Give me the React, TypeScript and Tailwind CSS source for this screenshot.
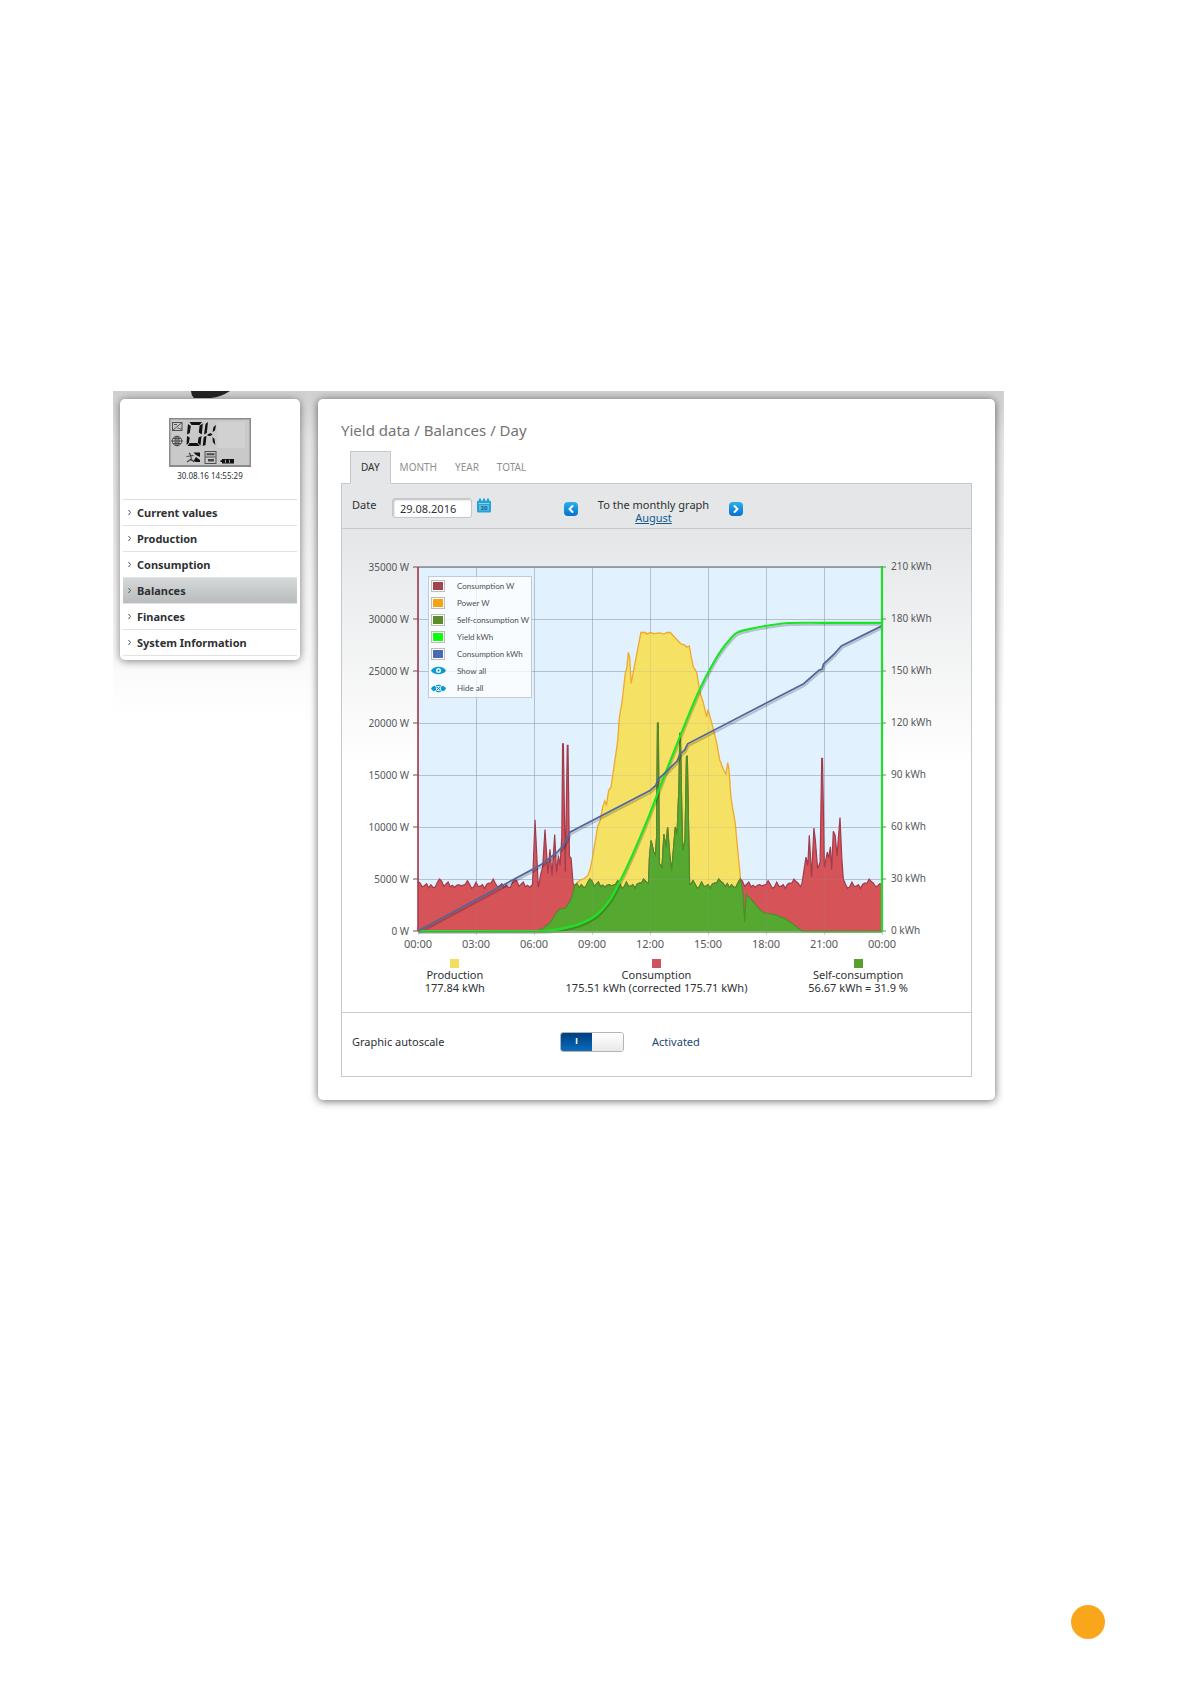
import { useState } from "react";
import { ChevronLeft, ChevronRight } from "lucide-react";

type Point = [number, number];

const menu = ["Current values", "Production", "Consumption", "Balances", "Finances", "System Information"];
const tabs = ["DAY", "MONTH", "YEAR", "TOTAL"];

const legend = [
  { label: "Consumption W", color: "bg-[#a04550]" },
  { label: "Power W", color: "bg-[#f5a50f]" },
  { label: "Self-consumption W", color: "bg-[#5a8c28]" },
  { label: "Yield kWh", color: "bg-[#0cff0c]" },
  { label: "Consumption kWh", color: "bg-[#4a69b0]" },
];

const totals = [
  { label: "Production", value: "177.84 kWh", color: "bg-[#f3de62]" },
  { label: "Consumption", value: "175.51 kWh (corrected 175.71 kWh)", color: "bg-[#cd5360]" },
  { label: "Self-consumption", value: "56.67 kWh = 31.9 %", color: "bg-[#57a030]" },
];

// All series are [hour of day, value]
const power: Point[] = [
  [0, 0], [6.2, 0], [6.5, 300], [6.8, 730], [7, 1300], [7.3, 2070], [7.65, 2250], [7.8, 2700], [7.97, 3300], [8.1, 4400],
  [8.25, 4700], [8.4, 4900], [8.6, 5050], [8.78, 5350], [8.9, 5900], [9.03, 7100], [9.3, 10100], [9.42, 10600], [9.55, 11900],
  [9.66, 12500], [9.75, 12150], [9.86, 13500], [9.98, 13800], [10.15, 15900], [10.33, 18300], [10.41, 20500], [10.55, 22000],
  [10.72, 24800], [10.8, 25300], [10.88, 26800], [10.95, 26300], [11.02, 23800], [11.24, 25900], [11.53, 28700], [11.75, 28700],
  [11.85, 28550], [12, 28700], [12.2, 28600], [12.5, 28650], [12.7, 28550], [12.9, 28700], [13.05, 28700], [13.3, 28200],
  [13.6, 27600], [13.8, 27500], [13.9, 27300], [14.03, 27400], [14.15, 26200], [14.24, 25400], [14.41, 24900], [14.59, 22900],
  [14.75, 22000], [14.93, 20600], [15, 21300], [15.24, 19700], [15.45, 18100], [15.6, 16500], [15.8, 15500], [15.93, 15100],
  [16.02, 16200], [16.08, 15600], [16.19, 12800], [16.41, 10300], [16.59, 6800], [16.7, 4700], [16.8, 3800], [16.9, 900],
  [16.97, 3500], [17.3, 2900], [17.6, 2200], [17.9, 1750], [18.5, 1550], [19.03, 1150], [19.55, 450], [19.86, 0], [24, 0],
];

const morning: Point[] = [
  [5.92, 4400], [6.05, 10700], [6.1, 9000], [6.22, 4200], [6.35, 5500], [6.45, 6150], [6.57, 9750], [6.72, 5500], [6.83, 7850], [6.93, 5350],
  [7.07, 9270], [7.17, 5650], [7.26, 7260], [7.35, 6300], [7.44, 9000], [7.48, 18000], [7.52, 18000], [7.62, 5700], [7.72, 17850],
  [7.76, 17850], [7.83, 7200], [7.92, 7000], [8.02, 4550],
];

const noon: Point[] = [
  [11.93, 4600], [11.97, 7000], [12.05, 8700], [12.19, 7600], [12.28, 7300], [12.34, 9000], [12.39, 20000], [12.43, 20000], [12.48, 6500],
  [12.62, 6100], [12.72, 9300], [12.83, 8000], [12.91, 10000], [13.03, 7100], [13.12, 5800], [13.31, 10000], [13.4, 9300],
  [13.5, 14000], [13.54, 19000], [13.57, 19000], [13.64, 12000], [13.69, 7700], [13.81, 8700], [13.89, 16800], [13.93, 16800], [14.05, 4500],
];

const evening: Point[] = [
  [19.86, 4600], [20.07, 7100], [20.16, 6300], [20.24, 9200], [20.36, 5200], [20.48, 9900], [20.55, 8800], [20.67, 6000], [20.8, 6600],
  [20.88, 16600], [20.92, 16600], [21.02, 6100], [21.17, 7600], [21.24, 7000], [21.33, 8100], [21.4, 5900], [21.48, 9600],
  [21.58, 9200], [21.67, 7200], [21.83, 10900], [21.92, 7000], [22, 5000],
];

const idle = [
  4750, 4300, 4500, 4250, 4200, 4600, 4450, 4850, 4400, 4650, 4250, 4100, 4500, 4200, 5000, 4350, 4500, 4100,
  4400, 4800, 4550, 4600, 4250, 4450, 4300, 4150, 4600, 4700, 4350, 4500, 4450, 5000, 4300, 4400, 4700, 4200,
];

const yieldKwh: Point[] = [
  [0, 0], [3, 0], [6.2, 0], [7, 0.6], [7.5, 1.5], [8.35, 4], [9.2, 9], [9.9, 17.5], [10.4, 27.5], [11.1, 44], [11.97, 67], [12.6, 85.5],
  [13.26, 104], [14.03, 125.4], [14.6, 140], [15.1, 151], [15.6, 160.5], [16.2, 169], [16.55, 172.3], [17.2, 174.3], [18, 176],
  [19.2, 177.7], [21, 177.8], [24, 177.8],
];

const usedKwh: Point[] = [
  [0, 0], [6, 36], [6.4, 38.5], [6.8, 42], [7.2, 45.5], [7.5, 49], [7.7, 53], [7.86, 57], [12, 81], [12.3, 84], [12.42, 87.5],
  [12.9, 92.5], [13.4, 98], [13.55, 102], [13.8, 104.5], [13.95, 108], [19.95, 142.7], [20.75, 150.5], [20.9, 151], [20.98, 154],
  [21.5, 159.5], [21.9, 164.5], [24, 176],
];

function buildConsumption() {
  const blocks = [morning, noon, evening];
  const points = blocks.flat();
  for (let i = 0; i <= 216; i++) {
    const hour = i / 9;
    if (!blocks.some((b) => hour >= b[0][0] && hour <= b[b.length - 1][0])) {
      points.push([hour, idle[(i * 5 + Math.floor(i / 36) * 5) % 36]]);
    }
  }
  return points.sort((a, b) => a[0] - b[0]);
}

function valueAt(series: Point[], hour: number) {
  const i = Math.max(1, series.findIndex((p) => p[0] >= hour));
  const [h0, v0] = series[i - 1];
  const [h1, v1] = series[i];
  return v0 + ((v1 - v0) * (hour - h0)) / (h1 - h0);
}

const consumption = buildConsumption();
const selfConsumption: Point[] = [...consumption, ...power]
  .map((p) => p[0])
  .sort((a, b) => a - b)
  .map((h) => [h, Math.min(valueAt(consumption, h), valueAt(power, h))]);

const LEFT = 76;
const TOP = 38;
const W = 464;
const H = 364;
const BOTTOM = TOP + H;

function line(series: Point[], max: number) {
  return series.map(([h, v], i) => `${i ? "L" : "M"}${(LEFT + (h / 24) * W).toFixed(1)} ${(BOTTOM - (v / max) * H).toFixed(1)}`).join("");
}

function area(series: Point[]) {
  return `${line(series, 35000)}L${LEFT + W} ${BOTTOM}L${LEFT} ${BOTTOM}Z`;
}

// Catmull-Rom spline
function curve(series: Point[], max: number) {
  const p = series.map(([h, v]) => [LEFT + (h / 24) * W, BOTTOM - (v / max) * H]);
  let d = `M${p[0][0]} ${p[0][1]}`;
  for (let i = 0; i < p.length - 1; i++) {
    const a = p[i - 1] ?? p[i];
    const b = p[i];
    const c = p[i + 1];
    const e = p[i + 2] ?? c;
    d += `C${b[0] + (c[0] - a[0]) / 6} ${b[1] + (c[1] - a[1]) / 6} ${c[0] - (e[0] - b[0]) / 6} ${c[1] - (e[1] - b[1]) / 6} ${c[0]} ${c[1]}`;
  }
  return d;
}

function Chart() {
  const rows = [0, 1, 2, 3, 4, 5, 6, 7];
  const cols = [0, 1, 2, 3, 4, 5, 6, 7, 8];
  const yieldPath = curve(yieldKwh, 210);
  const usedPath = line(usedKwh, 210);

  return (
    <svg viewBox="0 0 629 424" className="block w-full" role="img" aria-label="Energy balance of the day">
      <rect x={LEFT} y={TOP} width={W} height={H} fill="#e1f1fe" />
      <g stroke="#8c98a8" strokeOpacity="0.45" shapeRendering="crispEdges">
        {rows.slice(1).map((r) => <line key={r} x1={LEFT} x2={LEFT + W} y1={BOTTOM - r * 52} y2={BOTTOM - r * 52} />)}
        {cols.map((c) => <line key={c} x1={LEFT + c * 58} x2={LEFT + c * 58} y1={TOP} y2={BOTTOM + 4} />)}
      </g>
      <path d={area(power)} fill="#f5e164" />
      <path d={line(power, 35000)} fill="none" stroke="#efa92c" strokeWidth="1.3" />
      <path d={area(consumption)} fill="#d65358" />
      <path d={line(consumption, 35000)} fill="none" stroke="#a03a4c" strokeWidth="1.2" />
      <path d={area(selfConsumption)} fill="#56a930" />
      <path d={line(selfConsumption, 35000)} fill="none" stroke="#4a8f28" strokeWidth="1.2" />
      <g stroke="#8c98a8" strokeOpacity="0.16" shapeRendering="crispEdges">
        {rows.slice(1).map((r) => <line key={r} x1={LEFT} x2={LEFT + W} y1={BOTTOM - r * 52} y2={BOTTOM - r * 52} />)}
        {cols.map((c) => <line key={c} x1={LEFT + c * 58} x2={LEFT + c * 58} y1={TOP} y2={BOTTOM} />)}
      </g>
      <path d={`M${LEFT} ${TOP}H${LEFT + W}`} stroke="#858c94" strokeWidth="1.5" />
      <path d={usedPath} transform="translate(1 2)" fill="none" stroke="#000" strokeOpacity="0.2" strokeWidth="2" />
      <path d={yieldPath} transform="translate(1 2)" fill="none" stroke="#000" strokeOpacity="0.2" strokeWidth="2" />
      <path d={yieldPath} fill="none" stroke="#1ce424" strokeWidth="2.2" />
      <path d={usedPath} fill="none" stroke="#51669c" strokeWidth="1.8" />
      <path d={`M${LEFT} ${BOTTOM + 1}H${LEFT + W}`} stroke="#5f9a52" strokeWidth="1.5" />
      <path d={`M${LEFT} ${TOP}V${BOTTOM}`} stroke="#a83a4e" strokeWidth="1.6" />
      <path d={`M${LEFT + W} ${TOP - 1}V${BOTTOM}`} stroke="#22dd2c" strokeWidth="2.2" />
      <g fill="#55585b" fontSize="10">
        {rows.map((r) => (
          <g key={r}>
            <path d={`M${LEFT - 5} ${BOTTOM - r * 52}h5`} stroke="#8a4350" />
            <path d={`M${LEFT + W} ${BOTTOM - r * 52}h4`} stroke="#4e9a54" />
            <text x={LEFT - 9} y={BOTTOM - r * 52 + 4} textAnchor="end">{`${r * 5000} W`}</text>
            <text x={LEFT + W + 9} y={BOTTOM - r * 52 + 3}>{`${r * 30} kWh`}</text>
          </g>
        ))}
        {cols.map((c) => <text key={c} x={LEFT + c * 58} y={BOTTOM + 17} fontSize="11" textAnchor="middle">{`${String((c * 3) % 24).padStart(2, "0")}:00`}</text>)}
      </g>
    </svg>
  );
}

function Eye({ hidden }: { hidden?: boolean }) {
  return (
    <svg viewBox="0 0 15 9" className="h-[9px] w-[15px]" aria-hidden="true">
      <path d="M0 4.5C2-.6 13-.6 15 4.5 13 9.6 2 9.6 0 4.5Z" fill="#0c9bd0" />
      <circle cx="7.5" cy="4.5" r="2.5" fill="#e9f7fd" />
      {hidden ? <path d="M3 .5 12 8.5M12 .5 3 8.5" stroke="#e9f7fd" strokeWidth="1.2" /> : null}
      {hidden ? <path d="m5.5 2.7 4 3.6M9.5 2.7l-4 3.6" stroke="#0c7fb4" /> : <circle cx="7.5" cy="4.5" r="1" fill="#0c7fb4" />}
    </svg>
  );
}

function Display() {
  return (
    <svg viewBox="0 0 82 49" className="h-[49px] w-[82px]" role="img" aria-label="OK">
      <rect width="82" height="49" fill="#8b8b8b" />
      <rect x="1.5" y="1.5" width="79" height="45.5" fill="#c9c9c9" />
      <rect x="48" y="4" width="28" height="26" fill="#d1d1d1" />
      <g fill="none" stroke="#444" strokeWidth="0.9">
        <rect x="3.5" y="4.5" width="9.5" height="8" />
        <path d="m3.5 12.5 9.5-8M5 6.5h3M8.5 10.5q1-1 2 0t2 0" />
        <circle cx="8" cy="23" r="4.8" />
        <ellipse cx="8" cy="23" rx="2" ry="4.8" />
        <path d="M8 18v10M2 23h12M4 20.5h8M4 25.5h8" />
        <path d="M20 35q3 2 2 8M17.500 38.500l7-1M18 44l4-3 3 3" strokeWidth="1.1" />
        <rect x="36" y="33.500" width="11" height="12" />
        <path d="M36.500 39h10" />
      </g>
      <g fill="#111">
        <path d="M20.500 4H33l-2.500 3h-8zM19 6l2.800 2-1 7-2.800 1.500zM33.800 5.500l-1 11-3-2 .8-7zM18 18l2.800 1.500-1 5.500-2.300 2zM32.500 18l-1 9.500-2.700-2.500.7-5.500zM18.500 28l2.200-3h7.500l2.500 3z" />
        <path d="M39 4l-1.200 11-2.800 1.500L36.500 6zM37.500 18l-1 9-2.800 1 1-9zM38.500 16.500l3-1.500 2 1.500-2 1.500-3-.3zM43.500 14l1-5 2.500-2-1 5.500zM43.500 19l2 2 .8 6-2.500-3z" />
        <path d="M24.500 34.500H31v4.500q-4-1-6.500-4.500zM24.500 43l2.500-4 4 3v2h-4z" />
        <path d="M37.500 35.200h8v2h-8zM39 41h6v2.500h-6z" opacity=".7" />
        <path d="M53 41h12v4.500H53zM51.500 42.300H53v1.700h-1.500z" />
      </g>
      <path d="M56.500 41.800v3M60.500 41.800v3" stroke="#c9c9c9" strokeWidth=".8" />
    </svg>
  );
}

function CalendarIcon() {
  return (
    <svg viewBox="0 0 14 15" className="h-[15px] w-[14px]" aria-hidden="true">
      <path d="M1.500 2.500h11q1.500 0 1.500 1.500v9q0 1.500-1.500 1.500h-11Q0 14.500 0 13V4q0-1.500 1.500-1.500Z" fill="#25a3d8" />
      <path d="M2 .5h2v3H2zM6 .5h2v3H6zM10 .5h2v3h-2z" fill="#25a3d8" />
      <path d="M1.500 5.500h11" stroke="#a8def4" strokeWidth=".8" />
      <rect x="2" y="7" width="10" height="5.500" fill="#5fbce3" />
      <text x="7" y="12" fontSize="6" fontWeight="700" textAnchor="middle" fill="#0a5f92">30</text>
    </svg>
  );
}

const arrowButton = "grid size-[14px] place-items-center rounded-[4px] bg-linear-to-b from-[#2bb1ea] to-[#0a6fd0] text-white";

export default function App() {
  const [tab, setTab] = useState("DAY");
  const [autoscale, setAutoscale] = useState(true);

  return (
    <div className="flex flex-col bg-white pt-[391px] pb-[47px] font-['Noto_Sans',sans-serif] text-[11px] leading-[13px] text-[#2e3133]">
      <div className="relative mr-[187px] ml-[113px] flex items-start gap-[18px] overflow-hidden bg-[linear-gradient(#d0d0d0,#e6e6e6_50px,#f3f3f3_180px,#fff_330px)] pt-2 pr-[9px] pb-3 pl-[7px]">
        <svg viewBox="0 0 40 8" className="absolute top-0 left-[78px] h-2 w-10" aria-hidden="true">
          <path d="M0 0h39Q30 6 20 7L3 7Q0 4 0 0Z" fill="#242424" />
        </svg>

        <aside className="relative w-[180px] shrink-0 rounded-[5px] bg-white px-[3px] pt-[19px] pb-1 shadow-[0_1px_8px_rgba(0,0,0,0.5)]">
          <div className="flex h-[82px] flex-col items-center gap-[3px] border-b border-[#dcdcdc]">
            <Display />
            <time className="text-[8px] leading-[12px]">30.08.16 14:55:29</time>
          </div>
          <nav>
            {menu.map((item) => (
              <a key={item} href="#" className={`flex h-[26px] items-center gap-[5px] border-b border-[#e2e2e2] pl-1 text-[11px] font-bold ${item === "Balances" ? "bg-linear-to-b from-[#d6d9d9] to-[#b9bcbc]" : ""}`}>
                <svg viewBox="0 0 5 7" className="h-[7px] w-[5px]" aria-hidden="true">
                  <path d="m1.500 1 2 2.500-2 2.500" fill="none" stroke="#555" />
                </svg>
                {item}
              </a>
            ))}
          </nav>
        </aside>

        <main className="relative min-w-0 flex-1 rounded-[5px] bg-white px-[23px] pt-5 pb-[23px] shadow-[0_1px_8px_rgba(0,0,0,0.6)]">
          <h1 className="text-[15px] leading-[22px] text-[#737373]">Yield data / Balances / Day</h1>

          <div className="mt-[10px] flex h-[33px] pl-[9px]" role="tablist">
            {tabs.map((name) => (
              <button
                key={name}
                role="tab"
                aria-selected={tab === name}
                onClick={() => setTab(name)}
                className={`relative z-10 border text-[10px] ${tab === name ? "border-[#c5c9cb] border-b-[#e4e6e7] bg-[#e4e6e7] px-[10px] text-[#2e3133]" : "border-transparent px-[8px] text-[#8f8f8f]"}`}
              >
                {name}
              </button>
            ))}
          </div>

          <section className="-mt-px border border-[#c5c9cb]">
            <div className="flex h-[45px] items-start border-b border-[#c5c9cb] bg-[#e4e6e7] pl-[10px]">
              <div className="flex w-[212px] items-start pt-[14px]">
                <label htmlFor="date" className="w-10">Date</label>
                <input id="date" defaultValue="29.08.2016" className="h-5 w-20 rounded-[3px] border border-[#c4c7c9] bg-white px-[7px] text-[11px] shadow-[inset_1px_1px_2px_#bbb]" />
                <button aria-label="Open calendar" className="ml-[5px]"><CalendarIcon /></button>
              </div>
              <button aria-label="Previous day" className={`mt-[18px] ${arrowButton}`}><ChevronLeft size={12} strokeWidth={4} /></button>
              <p className="w-[151px] pt-[14px] text-center">
                To the monthly graph<br />
                <a href="#" className="text-[#12598f] underline">August</a>
              </p>
              <button aria-label="Next day" className={`mt-[18px] ${arrowButton}`}><ChevronRight size={12} strokeWidth={4} /></button>
            </div>

            <div className="relative bg-[linear-gradient(#e4e6e7,#eeeff0_80px,#fff_240px)]">
              <Chart />
              <div className="absolute top-[47px] left-[86px] flex w-[104px] flex-col border border-[#c0cbd6] bg-white/75 px-[2px] font-[Lato,sans-serif] text-[8px] leading-[10px] text-[#4c4f52]">
                {legend.map((entry) => (
                  <div key={entry.label} className="flex h-[17px] items-center whitespace-nowrap">
                    <span className="mr-3 border border-[#bcbcbc] bg-white p-px"><span className={`block h-2 w-[10px] ${entry.color}`} /></span>
                    {entry.label}
                  </div>
                ))}
                <button className="flex h-[17px] items-center gap-[11px]"><Eye />Show all</button>
                <button className="flex h-[18px] items-center gap-[11px]"><Eye hidden />Hide all</button>
              </div>
            </div>

            <div className="grid grid-cols-3 px-3 pt-[6px] pb-[18px]">
              {totals.map((total) => (
                <div key={total.label} className="flex flex-col items-center whitespace-nowrap">
                  <span className={`size-[9px] ${total.color}`} />
                  <span>{total.label}</span>
                  <span>{total.value}</span>
                </div>
              ))}
            </div>

            <div className="flex h-[64px] items-center border-t border-[#c9cbcd] pb-[6px] pl-[10px]">
              <label htmlFor="autoscale" className="w-[208px]">Graphic autoscale</label>
              <span className="relative flex h-5 w-[64px] overflow-hidden rounded-[3px] border border-[#b4b4b4]">
                <input id="autoscale" type="checkbox" checked={autoscale} onChange={(e) => setAutoscale(e.target.checked)} className="absolute inset-0 size-full opacity-0" />
                <span className="grid w-[31px] place-items-center bg-linear-to-b from-[#003f7f] to-[#0b6cbd] font-['Liberation_Sans',sans-serif] text-[9px] font-bold text-white">I</span>
                <span className="flex-1 bg-linear-to-b from-white to-[#e9e9e9]" />
              </span>
              <span className="ml-7 text-[#1d4874]">{autoscale ? "Activated" : "Deactivated"}</span>
            </div>
          </section>
        </main>
      </div>

      <footer className="mt-[493px] flex justify-end pr-[86px]">
        <span className="size-[34px] rounded-full bg-[#faa61a]" />
      </footer>
    </div>
  );
}
